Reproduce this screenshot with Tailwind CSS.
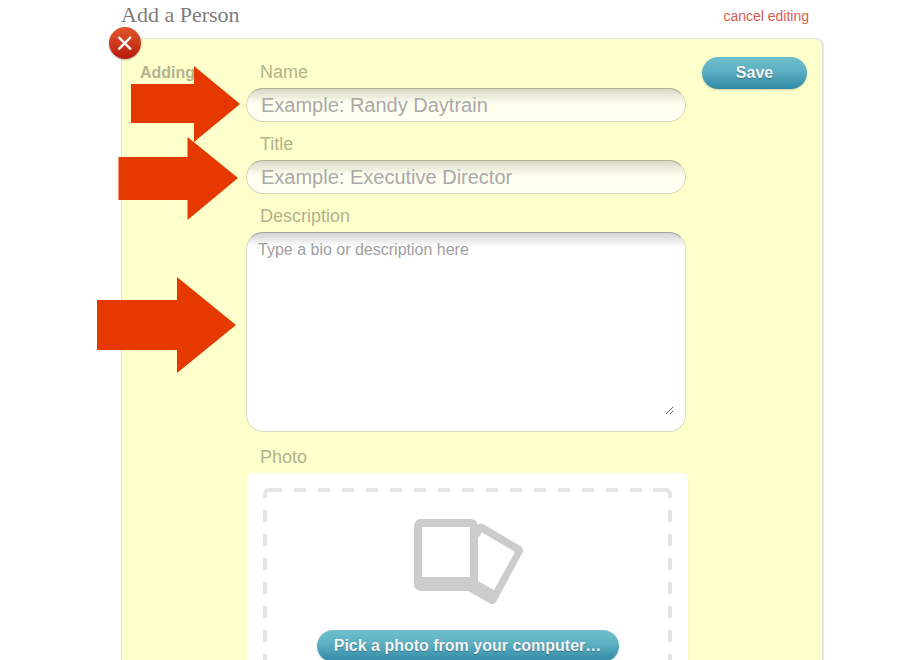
<!DOCTYPE html>
<html lang="en">
<head>
  <meta charset="UTF-8" />
  <meta name="viewport" content="width=device-width, initial-scale=1.0" />
  <title>Add a Person</title>
  <script src="https://cdn.jsdelivr.net/npm/@tailwindcss/browser@4"></script>
</head>

<body class="bg-white pl-6 font-['Liberation_Sans',Arial,sans-serif] text-[#b3b38c]">

  <main class="max-w-[702px] mx-auto">

    <header class="flex items-center justify-between h-[38px] pr-[14px] pb-[6px]">
      <h1 class="font-['Liberation_Serif',Georgia,serif] text-[22px] leading-[32px] pb-[2px] text-[#7c7c7c]">Add a Person</h1>
      <a href="#" class="text-[14px] leading-5 text-[#d2604f] hover:underline">cancel editing</a>
    </header>

    <form class="relative flex items-start bg-[#ffffcc] border border-[#e2e2e2] rounded-t-lg shadow-[1px_0_1px_rgba(0,0,0,0.1)] pl-[18px] pr-[15px] pt-[18px] pb-8">

      <!-- close -->
      <button type="button" aria-label="Close" class="absolute -left-[13px] -top-3 size-8 rounded-full bg-linear-to-b from-[#e0562a] to-[#b8160c] shadow-[0_1px_2px_rgba(0,0,0,0.3)] flex items-center justify-center">
        <svg class="size-8" viewBox="0 0 32 32" fill="none" stroke="#fff" stroke-width="2.4"><path d="M9.5 10l12.4 12.4M21.9 10L9.5 22.4"/></svg>
      </button>

      <p class="w-[106px] shrink-0 pt-1 font-bold text-[16px] leading-6">Adding</p>

      <div class="grow min-w-0 pt-[3px]">
        <label for="name" class="block pl-[14px] mb-1 text-[18px] leading-6">Name</label>
        <input id="name" type="text" placeholder="Example: Randy Daytrain"
               class="block w-full h-[34px] px-[14px] rounded-[17px] border border-[#d9d9ba] border-t-[#b0b096] bg-linear-to-b from-[#d9d9c8] via-[#fffff0] via-45% to-[#fffff2] text-[20px] text-[#555] placeholder:text-[#a9a9a9] outline-none">

        <label for="title" class="block pl-[14px] mt-[10px] mb-1 text-[18px] leading-6">Title</label>
        <input id="title" type="text" placeholder="Example: Executive Director"
               class="block w-full h-[34px] px-[14px] rounded-[17px] border border-[#d9d9ba] border-t-[#b0b096] bg-linear-to-b from-[#d9d9c8] via-[#fffff0] via-45% to-[#fffff2] text-[20px] text-[#555] placeholder:text-[#a9a9a9] outline-none">

        <label for="description" class="block pl-[14px] mt-[10px] mb-1 text-[18px] leading-6">Description</label>
        <div class="h-[200px] rounded-[17px] border border-[#dcdcca] border-t-[#a3a3a3] bg-linear-to-b from-[#d4d4d4] via-white via-7% to-white pt-[5px] pb-4 px-[11px]">
          <textarea id="description" placeholder="Type a bio or description here"
                    class="block w-full h-full bg-transparent text-[16px] leading-6 text-[#555] placeholder:text-[#a0a0a0] outline-none resize"></textarea>
        </div>

        <label for="photo" class="block pl-[14px] mt-[13px] mb-1 text-[18px] leading-6">Photo</label>
        <div class="ml-px -mr-[2px] rounded-md bg-white shadow-[0_1px_1px_rgba(0,0,0,0.15)] px-4 pt-[15px] pb-4">
          <div class="relative flex flex-col items-center pt-[31px] pb-8">
            <!-- dashed outline -->
            <svg class="absolute inset-0 w-full h-full" fill="none" stroke="#e5e5e5" stroke-width="4">
              <path d="M2 10V6a4 4 0 0 1 4-4h13"/>
              <line x1="31" y1="2" x2="95%" y2="2" stroke-dasharray="12"/>
              <line x1="2" y1="22" x2="2" y2="100%" stroke-dasharray="12"/>
              <svg x="100%" overflow="visible">
                <path d="M-2 10V6a4 4 0 0 0-4-4h-13"/>
                <line x1="-2" y1="22" x2="-2" y2="100%" stroke-dasharray="12"/>
              </svg>
            </svg>
            <!-- two prints -->
            <svg class="relative w-[108px] h-[86px] overflow-visible" viewBox="0 0 108 86">
              <path d="M67 9.500L104 31.500L78 80L52 65Z" fill="#ccc" stroke="#ccc" stroke-width="10" stroke-linejoin="round"/>
              <path d="M68 13.500L101 33L80 71L64 62V19Z" fill="#fff"/>
              <rect width="64" height="72" rx="7" fill="#ccc"/>
              <rect x="8" y="8" width="48" height="50" fill="#fff"/>
            </svg>
            <button id="photo" type="button" class="relative mt-[25px] h-8 w-[302px] rounded-full bg-linear-to-b from-[#6fbfcd] via-[#5cafc1] via-45% to-[#3089a6] shadow-[0_1px_2px_rgba(0,0,0,0.2)] text-[16px] font-bold text-[#f3f3f3] text-shadow-[0_1px_1px_rgba(0,0,0,0.3)]">Pick a photo from your computer…</button>
          </div>
        </div>
      </div>

      <button type="submit" class="shrink-0 ml-4 w-[105px] h-8 rounded-full bg-linear-to-b from-[#6fbfcd] via-[#5cafc1] via-45% to-[#3089a6] shadow-[0_1px_2px_rgba(0,0,0,0.2)] text-[16px] font-bold text-[#f3f3f3] text-shadow-[0_1px_1px_rgba(0,0,0,0.3)]">Save</button>

      <!-- arrows pointing at the fields -->
      <svg class="absolute -left-[25px] top-[27px] w-[144px] h-[310px] pointer-events-none" viewBox="0 0 144 310" fill="#e53900">
        <path d="M34 18H97V0L143 38L97 76V57H34Z"/>
        <path d="M21.500 91H90.500V71L141 112L90.500 154V134H21.500Z"/>
        <path d="M0 234H80V211L139 259L80 307V284H0Z"/>
      </svg>
    </form>
  </main>

</body>
</html>
